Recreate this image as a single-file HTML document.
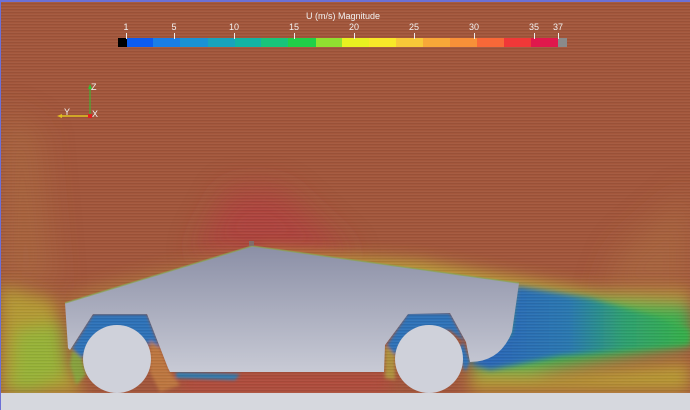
<!DOCTYPE html>
<html><head><meta charset="utf-8"><style>
html,body{margin:0;padding:0;width:690px;height:410px;overflow:hidden;background:#a3573c}
svg{display:block}
</style></head><body>
<svg width="690" height="410" viewBox="0 0 690 410" xmlns="http://www.w3.org/2000/svg">
<defs>
<filter id="b8" x="-50%" y="-50%" width="200%" height="200%"><feGaussianBlur stdDeviation="8"/></filter>
<filter id="b4" x="-50%" y="-50%" width="200%" height="200%"><feGaussianBlur stdDeviation="3"/></filter>
<filter id="b2" x="-50%" y="-50%" width="200%" height="200%"><feGaussianBlur stdDeviation="1.5"/></filter>
<filter id="b15" x="-50%" y="-50%" width="200%" height="200%"><feGaussianBlur stdDeviation="15"/></filter>
<pattern id="st" width="690" height="3" patternUnits="userSpaceOnUse">
<rect width="690" height="1" fill="#000" opacity="0.06"/>
<rect y="2" width="690" height="1" fill="#fff" opacity="0.04"/>
</pattern>
<linearGradient id="body" x1="0" y1="0" x2="0" y2="1">
<stop offset="0" stop-color="#8b8fa6"/><stop offset="1" stop-color="#c8cad5"/>
</linearGradient>
<linearGradient id="wake" x1="0" y1="0" x2="1" y2="0">
<stop offset="0" stop-color="#2a62b8"/><stop offset="0.45" stop-color="#2a78b0"/><stop offset="0.7" stop-color="#2ea070"/><stop offset="1" stop-color="#36b048"/>
</linearGradient>
</defs>
<rect width="690" height="410" fill="#a3573c"/>
<g filter="url(#b15)">
<path d="M0 110 L40 130 L55 290 L0 290Z" fill="#ae7040" opacity="0.5"/>
<path d="M620 250 L690 190 L690 300 L600 300Z" fill="#ae7040" opacity="0.5"/>
<path d="M195 255 L230 190 L280 190 L355 260 Z" fill="#b33a3e" opacity="0.7"/>
</g>
<g filter="url(#b8)">
<path d="M0 285 L55 300 L65 360 L85 395 L0 395Z" fill="#b49a36"/>
<path d="M15 330 L62 322 L68 375 L30 392 L10 392Z" fill="#90b838" opacity="0.8"/>
<path d="M260 252 L420 262 L600 292 L690 292 L690 302 L520 300 L260 258Z" fill="#bca43a"/>
<path d="M520 295 L690 305 L690 345 L560 368 L490 380 L470 368Z" fill="#40b050"/>
<path d="M470 372 L560 374 L690 362 L690 392 L470 392Z" fill="#b89a34"/>
<path d="M180 374 L390 374 L390 392 L180 392Z" fill="#b44a3e"/>
<path d="M62 300 L100 287 L240 252 L240 260 L70 310Z" fill="#b08040" opacity="0.8"/>
</g>
<g filter="url(#b4)">
<path d="M516 286 L590 298 L660 318 L690 330 L690 345 L560 356 L490 370 L470 364 L510 334Z" fill="url(#wake)"/>
</g>
<g filter="url(#b2)">
<path d="M72 348 L93 314 L147 314 L160 348 L150 346 L130 330 L100 332 L82 358Z" fill="#2d72b8"/>
<path d="M150 340 L160 348 L170 372 L180 385 L160 392 L150 372Z" fill="#c07a40" opacity="0.9"/>
<path d="M72 350 L82 358 L86 375 L76 385 L70 365Z" fill="#80b040" opacity="0.8"/>
<path d="M387 345 L408 313 L450 313 L465 342 L450 330 L410 332 L395 355Z" fill="#2d72b8"/>
<path d="M385 345 L395 355 L395 380 L385 378Z" fill="#b0a040" opacity="0.8"/>
<path d="M463 342 L470 362 L465 372 L458 350Z" fill="#2d72b8"/>
<path d="M176 372 L240 374 L235 380 L176 378Z" fill="#2e7cb0"/>
</g>
<rect width="690" height="393" fill="url(#st)"/>
<path d="M65 303 L252 246 L519 283 L512 332 Q500 362 470 362 L466 342 L450 313 L408 314 L385 345 L384 372 L170 372 L168 368 L147 314 L93 314 L70 350 L68 348 Z" fill="url(#body)"/>
<path d="M65 303 L252 246 L519 283" fill="none" stroke="#8aa450" stroke-width="1.5" opacity="0.7"/>
<rect x="249" y="241" width="5" height="5" fill="#777" opacity="0.8"/>
<circle cx="117" cy="359" r="34" fill="#cfd1da"/>
<circle cx="429" cy="359" r="34" fill="#cfd1da"/>
<rect x="0" y="393" width="690" height="17" fill="#d6d8de"/>
<rect x="0" y="0" width="690" height="2" fill="#6c70d6"/>
<rect x="0" y="0" width="1" height="410" fill="#6c70d6"/>
<g font-family="Liberation Sans, sans-serif" font-size="9" fill="#f2f2f2" text-anchor="middle">
<text x="343" y="19">U (m/s) Magnitude</text>
<text x="126" y="30">1</text><text x="174" y="30">5</text><text x="234" y="30">10</text>
<text x="294" y="30">15</text><text x="354" y="30">20</text><text x="414" y="30">25</text>
<text x="474" y="30">30</text><text x="534" y="30">35</text><text x="558" y="30">37</text>
</g>
<g>
<rect x="118" y="38" width="9" height="9" fill="#000"/>
<rect x="127" y="38" width="27" height="9" fill="#0c5cf0"/>
<rect x="153" y="38" width="28" height="9" fill="#1a7ee6"/>
<rect x="180" y="38" width="29" height="9" fill="#1a92d4"/>
<rect x="208" y="38" width="28" height="9" fill="#18a4bc"/>
<rect x="235" y="38" width="27" height="9" fill="#12b4a4"/>
<rect x="261" y="38" width="28" height="9" fill="#18c47a"/>
<rect x="288" y="38" width="28" height="9" fill="#20d048"/>
<rect x="316" y="38" width="27" height="9" fill="#90e030"/>
<rect x="342" y="38" width="28" height="9" fill="#e8f020"/>
<rect x="369" y="38" width="28" height="9" fill="#f8e828"/>
<rect x="396" y="38" width="28" height="9" fill="#f8c838"/>
<rect x="423" y="38" width="28" height="9" fill="#f8a838"/>
<rect x="450" y="38" width="28" height="9" fill="#f89038"/>
<rect x="477" y="38" width="28" height="9" fill="#f86838"/>
<rect x="504" y="38" width="28" height="9" fill="#f03838"/>
<rect x="531" y="38" width="28" height="9" fill="#e0184c"/>
<rect x="558" y="38" width="9" height="9" fill="#8a8a8a"/>
<g stroke="#eee" stroke-width="1">
<line x1="126.5" y1="33" x2="126.5" y2="39"/><line x1="174.5" y1="33" x2="174.5" y2="39"/>
<line x1="234.5" y1="33" x2="234.5" y2="39"/><line x1="294.5" y1="33" x2="294.5" y2="39"/>
<line x1="354.5" y1="33" x2="354.5" y2="39"/><line x1="414.5" y1="33" x2="414.5" y2="39"/>
<line x1="474.5" y1="33" x2="474.5" y2="39"/><line x1="534.5" y1="33" x2="534.5" y2="39"/>
<line x1="558.5" y1="33" x2="558.5" y2="39"/>
</g>
</g>
<line x1="90" y1="116" x2="90" y2="86" stroke="#30c030" stroke-width="1"/>
<path d="M88 89 L90 84 L92 89Z" fill="#30c030"/>
<line x1="90" y1="116" x2="60" y2="116" stroke="#e0c020" stroke-width="1.5"/>
<path d="M62 114 L57 116 L62 118Z" fill="#e0c020"/>
<rect x="88" y="114" width="4" height="4" fill="#e02020"/>
<g font-family="Liberation Sans, sans-serif" font-size="9" fill="#f2f2f2">
<text x="91" y="90">Z</text><text x="64" y="115">Y</text><text x="92" y="117">X</text>
</g>
</svg>
</body></html>
